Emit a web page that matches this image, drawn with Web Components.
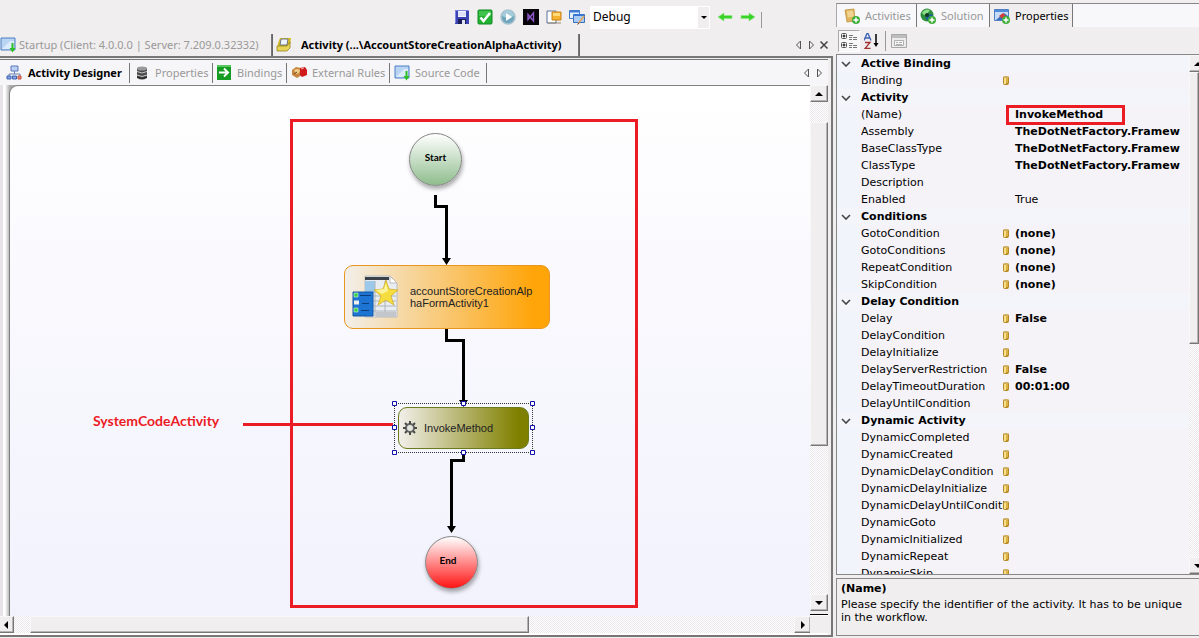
<!DOCTYPE html>
<html lang="en">
<head>
<meta charset="utf-8">
<title>Workflow Studio</title>
<style>
html, body { height: 100%; }
body { margin: 0; background: #f0eeef; color: #000; font: 12px/16px "Noto Sans", "Open Sans", sans-serif; overflow: hidden; }
</style>
</head>
<body>
<wf-studio></wf-studio>
<script>
const define = (name, html, setup) => customElements.define(name, class extends HTMLElement {
  constructor() {
    super();
    const t = document.createElement('template');
    t.innerHTML = html;
    this.attachShadow({ mode: 'open' }).appendChild(t.content.cloneNode(true));
  }
  connectedCallback() { if (setup) setup(this, this.shadowRoot); }
});

/* Icons, all on a 16 x 16 grid unless stated */
const windowArt = '<path d="M1 1h14v12H1z" fill="#b9d4f3" stroke="#4d7fc4"/><path d="M2 12 10 4h4v8z" fill="#dcebfb"/>';
const plus = '<circle cx="12" cy="12" r="4" fill="#3fae3a"/><path d="M12 9.500v5M9.500 12h5" stroke="#fff" stroke-width="1.500"/>';
const ICONS = {
  save: '<path d="M1 1h13l1 1v13H1z" fill="#3c43b4"/><path d="M1 1h13v1H2v12H1z" fill="#7a83e0"/><path d="M4 2h8v6H4z" fill="#f4f6ff"/><path d="M4 4h8M4 6h8" stroke="#c8cdf0"/><path d="M4 10h8v5H4z" fill="#1b1d55"/><path d="M8 11h3v4H8z" fill="#dfe2f5"/>',
  check: '<rect x="1" y="1" width="14" height="14" rx="1" fill="#22b233" stroke="#138a22"/><path d="M2 2h12v5H2z" fill="#53cf5c" opacity=".6"/><path d="M3.500 8.500 6.500 12 13 4" fill="none" stroke="#fff" stroke-width="2.600"/>',
  play: '<circle cx="8" cy="8" r="7" fill="#6fa6bd" stroke="#a9c3cf" stroke-width="1.500"/><path d="M2 7a6 6 0 0 1 12 0c-4 2-8 2-12 0z" fill="#a6ccdb"/><path d="M6 4l6 4-6 4z" fill="#fff"/>',
  vs: '<path d="M0 0h16v16H0z" fill="#07040c"/><path d="M5 5.500v5L10.500 4v8z" fill="none" stroke="#8c57c8" stroke-width="1.400"/>',
  page: '<path d="M1 2h9v12H1z" fill="#fff" stroke="#5b7396"/><path d="M2 14h13" stroke="#9b8a7a"/><path d="M6 3h9v8H6z" fill="#f6b12e" stroke="#c98117"/><path d="M7 4h7v3H7z" fill="#ffd97a"/>',
  windows: '<path d="M.5 1.500h10v8H.5z" fill="#e4effc" stroke="#4179c8"/><path d="M.5 1.500h10v2H.5z" fill="#3e7cd6"/><path d="M4.500 5.500h11v8h-11z" fill="#a9cbf3" stroke="#3a6fbd"/><path d="M5 5h10v2H5z" fill="#3675d1"/><path d="M9 15l6-8" stroke="#e0a658" stroke-width="1.500"/><path d="M8.500 15.500l2-2" stroke="#555"/>',
  back: '<path d="M1 8l6-4v2.500h8v3H7V12z" fill="#38d326" stroke="#8ee685" stroke-width=".6"/>',
  forward: '<path d="M15 8 9 4v2.500H1v3h8V12z" fill="#38d326" stroke="#8ee685" stroke-width=".6"/>',
  startup: windowArt + '<path d="M11.500 6h2v5h2l-3 4.500-3-4.500h2z" fill="#2fc024"/>',
  activity: '<path d="M4 1h11l-1 8-2 3H1l1-6z" fill="#d5bd25"/><path d="M5 2h7l-1 6H4z" fill="#eef4fb" stroke="#6d7480"/><path d="M1 9h10l3-4v6l-3 3H1z" fill="#e8d557" stroke="#8b7a15" stroke-width=".7"/>',
  tree: '<path d="M5 1h7v5H5z" fill="#bcd0f3" stroke="#5a78bd"/><path d="M8.500 6v3M3 11V9h11v2" fill="none" stroke="#6b7fae"/><path d="M1 11h4v3H1z" fill="#86a5e6" stroke="#3e62b0"/><path d="M6.500 11h4v3h-4z" fill="#86a5e6" stroke="#3e62b0"/><path d="M12 11h3v3h-3z" fill="#ef8d7c" stroke="#c04f3d"/>',
  database: '<path d="M3 3v10q5 3 10 0V3z" fill="#4a4a4a"/><ellipse cx="8" cy="3.500" rx="5" ry="2" fill="#9a9a9a"/><path d="M3 6.500q5 3 10 0M3 10q5 3 10 0" fill="none" stroke="#c9c9c9"/><path d="M3 12q5 3 10 0" fill="none" stroke="#222"/>',
  binding: '<path d="M1 0h14v15H1z" fill="#169c22"/><path d="M1 0h14v2H1z" fill="#5bc763"/><path d="M3 7.500h8M8 3.500l4 4-4 4" fill="none" stroke="#fff" stroke-width="2"/>',
  rules: '<path d="M1 5l4-3 5 1 1 7-5 3-5-3z" fill="#c8873e"/><path d="M3 5l3-1 3 1-1 3-3 1z" fill="#f0cf8b"/><path d="M3 9l3-2" stroke="#6b3b12"/><path d="M9 3l5-1 2 3v5l-5 2-2-2z" fill="#cf1b1b"/><path d="M10 4l3-1" stroke="#f4a2a2"/>',
  activities: '<path d="M1 2l9-1 1 12-8 1z" fill="#e0b45c" stroke="#b98a35" stroke-width=".7"/><path d="M3 3l6-.5.8 6-6 1z" fill="#f1d391"/>' + plus,
  solution: '<circle cx="7" cy="7" r="6.500" fill="#2d8f3c"/><path d="M2 5q3-5 8-3l-3 4-3 1z" fill="#8fe08c"/><path d="M5 9q4-4 8-2-1 5-5 6z" fill="#1c5fa0"/><circle cx="7" cy="7" r="2" fill="#123c1c"/>' + plus,
  properties: '<path d="M.5 1.500h14v11H.5z" fill="#c5dcf6" stroke="#4d7fc4"/><path d="M1 2h13v2H1z" fill="#4f8ad8"/><path d="M2 12l8-7 4 3v4z" fill="#3a6fbd"/><path d="M5 8l4-3 3 3-3 3z" fill="#d33c3c"/>' + plus,
  categories: '<rect x=".5" y=".5" width="5" height="5" rx="1" fill="#fff" stroke="#555"/><rect x=".5" y="9.500" width="5" height="5" rx="1" fill="#fff" stroke="#555"/><path d="M1.500 3h3M3 1.500v3M1.500 12h3M3 10.500v3" stroke="#000"/><path d="M8 2.500h4M8 4.500h3M12 4.500h4M8 6.500h3M12 6.500h4M8 10.500h4M8 12.500h3M12 12.500h4M8 14.500h3M12 14.500h4" stroke="#777"/>',
  sort: '<path d="M0 7.500 3 .5h1l3 7M1.500 5h4" fill="none" stroke="#3a60b5" stroke-width="1.300"/><path d="M1 9.500h5l-5 6h5.500" fill="none" stroke="#a03030" stroke-width="1.300"/><path d="M12 1v11" stroke="#000" stroke-width="1.500"/><path d="M9.500 10h5L12 14z"/>',
  pages: '<path d="M.5 1.500h15v13H.5z" fill="#ececec" stroke="#a8a8a8"/><path d="M1 2h14v3H1z" fill="#bdbdbd"/><path d="M3.500 7.500h9v5h-9z" fill="#f6f6f6" stroke="#b0b0b0"/><path d="M5 9.500h2M8 9.500h3M5 11.500h6" stroke="#b0b0b0"/>',
  left: '<path d="M10.500 4v8l-4-4z" fill="none" stroke="#555"/>',
  right: '<path d="M6.500 4v8l4-4z" fill="none" stroke="#555"/>',
  close: '<path d="M4.500 4.500l7 7M11.500 4.500l-7 7" stroke="#444" stroke-width="1.500"/>',
  gear: '<circle cx="8" cy="8" r="4" fill="#e6e6e0" stroke="#666" stroke-width="2"/><path d="M8 1v3M8 12v3M1 8h3M12 8h3M3 3l2 2M11 11l2 2M13 3l-2 2M5 11l-2 2" stroke="#4a4a4a" stroke-width="2"/>'
};
define('wf-icon', '<style>:host{display:block;flex:none;width:16px;height:16px}svg{display:block;width:100%;height:100%}</style><svg viewBox="0 0 16 16" aria-hidden="true"></svg>',
  (el, r) => { r.querySelector('svg').innerHTML = ICONS[el.getAttribute('name')]; });

define('wf-button', `<style>
:host{display:block;flex:none}
button{display:block;margin:0;padding:0;border:0;background:none}
:host([pressed]) button{padding:2px;border:1px solid;border-color:#aaa #fff #fff #aaa;background:#f8f7f8}
</style><button type="button"></button>`,
  (el, r) => {
    const name = el.getAttribute('name');
    const button = r.querySelector('button');
    button.setAttribute('aria-label', name);
    button.innerHTML = `<wf-icon name="${name}"></wf-icon>`;
  });

define('wf-toolbar', `<style>
:host{display:flex;height:34px;box-sizing:border-box;align-items:center;justify-content:flex-end;gap:7px;padding-right:71px}
.combo{position:relative;display:block;width:120px;margin-left:-2px}
select{appearance:none;display:block;width:100%;height:23px;padding:0 3px;border:0;border-radius:0;background:#fff;color:#000;font:12px/22px "Noto Sans",sans-serif}
.combo svg{position:absolute;right:1px;top:1px;background:#f0eeef;pointer-events:none}
.sep{width:1px;height:16px;background:#999;align-self:flex-end;margin:0 0 6px -2px}
</style>
<wf-button name="save"></wf-button><wf-button name="check"></wf-button><wf-button name="play"></wf-button><wf-button name="vs"></wf-button><wf-button name="page"></wf-button><wf-button name="windows"></wf-button>
<label class="combo"><select aria-label="Configuration"><option>Debug</option></select><svg width="11" height="21"><path d="M3 9h6l-3 3z"/></svg></label>
<wf-button name="back"></wf-button><wf-button name="forward"></wf-button><span class="sep"></span>`);

define('wf-tab', `<style>
:host{display:block;flex:none}
button{display:flex;align-items:center;gap:var(--gap,5px);width:100%;height:100%;margin:0;padding:0 0 0 var(--lead,4px);border:0;background:none;color:#999;font:11px/16px "Noto Sans",sans-serif;white-space:nowrap;border-right:1px solid #777}
:host([active]) button{color:#000}
:host([bold]) button{font-weight:700}
</style><button type="button" role="tab"><slot name="icon"></slot><span><slot></slot></span></button>`);

define('wf-scrollbar', `<style>
:host{display:flex;min-width:0;min-height:0;background:repeating-conic-gradient(#eae8ea 0 25%,#fff 0 50%) 0 0/2px 2px;--side:17px}
:host([vertical]){flex-direction:column}
button{flex:none;display:grid;place-items:center;box-sizing:border-box;width:var(--side);height:var(--side);margin:0;padding:0}
:host([vertical]) button{width:auto;min-width:var(--side)}
button,.thumb{box-sizing:border-box;border:1px solid;border-color:#f8f8f8 #777 #777 #f8f8f8;background:#f0eeef;box-shadow:inset -1px -1px #b5b3b4}
.track{flex:1;display:flex;flex-direction:inherit;min-height:0;min-width:0}
.before{flex:none;flex-basis:var(--before,0%)}
.thumb{flex:none;flex-basis:var(--thumb,50%)}
svg{display:block}
.v{display:none}:host([vertical]) .v{display:block}:host([vertical]) .h{display:none}
</style>
<button type="button" aria-label="Scroll back"><svg width="8" height="8"><path class="h" d="M6 0v8L2 4z"/><path class="v" d="M0 6h8L4 2z"/></svg></button>
<div class="track"><div class="before"></div><div class="thumb"></div></div>
<button type="button" aria-label="Scroll on"><svg width="8" height="8"><path class="h" d="M2 0v8l4-4z"/><path class="v" d="M0 2h8L4 6z"/></svg></button>`);

/* Workflow nodes */
define('wf-terminal', `<style>
:host{display:grid;place-items:center;box-sizing:border-box;width:53px;height:53px;padding-bottom:6px;border:1px solid #858585;border-radius:50%;background:linear-gradient(#fff,var(--tone));box-shadow:1px 3px 4px #0005;font:bold 10px/12px Lato,sans-serif}
</style><span><slot></slot></span>`);
define('wf-step', `<style>
:host{display:flex;align-items:center;box-sizing:border-box;border:1px solid var(--edge);border-radius:9px;background:linear-gradient(90deg,#f2efea,var(--tone) 92%);font:11px/12px "Liberation Sans",sans-serif;color:#222}
</style><slot name="icon"></slot><span><slot></slot></span>`);
define('wf-form-art', `<style>:host{display:block;flex:none}svg{display:block}</style>
<svg width="48" height="44" viewBox="0 0 48 44" aria-hidden="true">
<path d="M13 1h25l7 7v34H13z" fill="#e9edf1" stroke="#b8bcc2"/><path d="M13 2h24v3H13z" fill="#3b4148"/><path d="M13 6h10v12H13z" fill="#9cc8ea"/><path d="M38 1v7h7z" fill="#fff" stroke="#bbb"/>
<path d="M14 21h30M14 26h30M14 31h30M14 36h30M23 6v35M33 6v35" stroke="#aeb4bb"/><path d="M24 37h20v5H24z" fill="#c3c6ca"/>
<path d="M34 5l3 9 9 1-7 6 3 9-8-5-8 5 3-9-7-6 9-1z" fill="#f5dd3f" stroke="#cfa823" stroke-width=".7"/><path d="M34 8l2 8-6 3-6-4 8-1z" fill="#fdf39a"/>
<path d="M1 17h20v24H1z" fill="#1d74d3" stroke="#15569f"/><path d="M2 18h4v4H2zM2 33h4v4H2z" fill="#39d04a" stroke="#d6f5da" stroke-width=".6"/><path d="M2 25.500h5v4H2z" fill="#f0f0f0"/><path d="M8 20.500h11M10 28.500h7M9 35.500h8" stroke="#0d3d78"/>
</svg>`);

define('wf-canvas', `<style>
:host{display:block;min-width:0;min-height:0;overflow:hidden;background:linear-gradient(90deg,#e6e4e6,#e6e4e6 3px,#fff 3px,#fff 5px,#aaa 10px)}
.sheet{position:relative;box-sizing:border-box;height:100%;margin-left:9px;border:1px solid #808080;border-width:1px 0 0 1px;border-radius:9px 0 0 0;background:linear-gradient(#fff,#f9f9fe 40%,#f1f2fc)}
.sheet>*{position:absolute}
.links{left:0;top:0}
.frame{left:280px;top:33px;width:342px;height:483px;border:3px solid #ec1c24}
.start{left:399px;top:47px;--tone:#8fbd8d}
.form{left:334px;top:179px;width:206px;height:64px;padding-left:7px;gap:10px;--tone:#ffa50a;--edge:#e8961e}
.invoke{left:388px;top:321px;width:131px;height:42px;padding-left:3px;gap:6px;--tone:#808000;--edge:#6d7a1c}
.end{left:415px;top:450px;padding-right:7px;--tone:#ff1414}
.note{left:83px;top:326px;color:#ec1c24;font:bold 14px/18px Lato,sans-serif}
</style>
<div class="sheet">
<svg class="links" width="640" height="520" aria-hidden="true">
<g fill="none" stroke="#000" stroke-width="3"><path d="M425.500 109v11.500h11V174"/><path d="M436.500 243v11.500h17V317"/><path d="M453.500 364v10.500h-12V441"/><path d="M233 338.500h150" stroke="#ec1c24"/></g>
<path d="M432 172h9l-4.500 7zM449 314h9l-4.500 7zM437 440h9l-4.500 7z"/>
</svg>
<wf-terminal class="start">Start</wf-terminal>
<wf-step class="form"><wf-form-art slot="icon"></wf-form-art>accountStoreCreationAlp<br>haFormActivity1</wf-step>
<wf-step class="invoke"><wf-icon slot="icon" name="gear"></wf-icon>InvokeMethod</wf-step>
<wf-terminal class="end">End</wf-terminal>
<svg class="links" width="640" height="520" aria-hidden="true"><path d="M384 317.500h139M384 366.500h139M384.500 318v49M522.500 318v49" fill="none" stroke="#333" stroke-dasharray="1 1"/>
<path d="M382.500 315.500h4v4h-4zM451.500 315.500h4v4h-4zM520.500 315.500h4v4h-4zM382.500 339.500h4v4h-4zM520.500 339.500h4v4h-4zM382.500 364.500h4v4h-4zM451.500 364.500h4v4h-4zM520.500 364.500h4v4h-4z" fill="#fff" stroke="#1010a8"/></svg>
<span class="note">SystemCodeActivity</span>
<div class="frame"></div>
</div>`);

define('wf-designer', `<style>
:host{display:flex;flex-direction:column;min-width:0;min-height:0}
.tabs{display:flex;flex:none;height:22px}
.outer wf-tab{border-right:1px solid #666}
.outer .first{width:272px;--lead:0px;--gap:3px}
.outer .second{width:306px;--lead:3px;--gap:9px}
.nav{display:flex;align-items:center;margin-left:auto;margin-right:3px}
.nav wf-button{width:13px;display:flex;justify-content:center}
.frame{display:flex;flex:1;flex-direction:column;min-height:0;border:solid #777;border-width:2px 2px 2px 0;margin-bottom:1px;padding:1px 3px 0 0}
.inner{height:25px;background:#f6f5f8;border-top:1px solid #777;align-items:center}
.inner wf-tab{height:20px}
.inner .a{width:130px;--lead:6px;--gap:6px}.inner .b{width:83px}.inner .c{width:74px;--lead:3px}.inner .d{width:103px}.inner .e{width:97px}
.body{flex:1;min-height:0;display:grid;grid-template:minmax(0,1fr) 17px / minmax(0,1fr) 18px;padding-bottom:2px;background:#fff}
.side{display:flex;flex-direction:column;min-height:0}
.side wf-scrollbar{flex:1;--before:4%;--thumb:66%}
.grip{height:3px;border-bottom:1px solid #000;margin-bottom:1px;background:#f0eeef}
.bottom{display:flex;margin-right:-1px}
.bottom wf-scrollbar{flex:1;--before:2%;--thumb:64%;margin-left:-3px}
.corner{background:#f0eeef}
</style>
<wf-toolbar></wf-toolbar>
<div class="tabs outer" role="tablist">
<wf-tab class="first"><wf-icon slot="icon" name="startup"></wf-icon>Startup (Client: 4.0.0.0 | Server: 7.209.0.32332)</wf-tab>
<wf-tab class="second" active bold><wf-icon slot="icon" name="activity"></wf-icon>Activity (...\\AccountStoreCreationAlphaActivity)</wf-tab>
<div class="nav"><wf-button name="left"></wf-button><wf-button name="right"></wf-button><wf-button name="close"></wf-button></div>
</div>
<div class="frame">
<div class="tabs inner" role="tablist">
<wf-tab class="a" active bold><wf-icon slot="icon" name="tree"></wf-icon>Activity Designer</wf-tab>
<wf-tab class="b"><wf-icon slot="icon" name="database"></wf-icon>Properties</wf-tab>
<wf-tab class="c"><wf-icon slot="icon" name="binding"></wf-icon>Bindings</wf-tab>
<wf-tab class="d"><wf-icon slot="icon" name="rules"></wf-icon>External Rules</wf-tab>
<wf-tab class="e"><wf-icon slot="icon" name="startup"></wf-icon>Source Code</wf-tab>
<div class="nav"><wf-button name="left"></wf-button><wf-button name="right"></wf-button></div>
</div>
<div class="body">
<wf-canvas></wf-canvas>
<div class="side"><wf-scrollbar vertical></wf-scrollbar><div class="grip"></div></div>
<div class="bottom"><wf-scrollbar></wf-scrollbar></div>
<div class="corner"></div>
</div>
</div>`);

/* [label, value, has binding marker]; a lone label opens a category */
const PROPS = [
  ['Active Binding'], ['Binding', '', 1],
  ['Activity'], ['(Name)', 'InvokeMethod', 0], ['Assembly', 'TheDotNetFactory.Framew', 0], ['BaseClassType', 'TheDotNetFactory.Framew', 0], ['ClassType', 'TheDotNetFactory.Framew', 0], ['Description', '', 0], ['Enabled', 'True', 0],
  ['Conditions'], ['GotoCondition', '(none)', 1], ['GotoConditions', '(none)', 1], ['RepeatCondition', '(none)', 1], ['SkipCondition', '(none)', 1],
  ['Delay Condition'], ['Delay', 'False', 1], ['DelayCondition', '', 1], ['DelayInitialize', '', 1], ['DelayServerRestriction', 'False', 1], ['DelayTimeoutDuration', '00:01:00', 1], ['DelayUntilCondition', '', 1],
  ['Dynamic Activity'], ['DynamicCompleted', '', 1], ['DynamicCreated', '', 1], ['DynamicDelayCondition', '', 1], ['DynamicDelayInitialize', '', 1], ['DynamicDelayUntilConditi', '', 1], ['DynamicGoto', '', 1], ['DynamicInitialized', '', 1], ['DynamicRepeat', '', 1], ['DynamicSkip', '', 1]
];
define('wf-property-grid', `<style>
:host{display:grid;grid-template-columns:minmax(0,1fr) 10px;min-height:0;overflow:hidden;border:1px solid #888;border-right:0;background:#f5f2f8;font:11px/17px "DejaVu Sans",sans-serif}
.view{overflow:hidden;min-height:0;background:linear-gradient(90deg,#f2f4fb 22px,#f5f2f8 22px)}
table{width:100%;table-layout:fixed;border-collapse:collapse}
.gut{width:24px}.nam{width:150px}
td,th{height:17px;padding:0;text-align:left;white-space:nowrap;overflow:hidden;font-weight:400}
th[scope=rowgroup]{font-weight:700}
tr.cat{background:#f3f5fb}
.name{position:relative}
.name svg{position:absolute;right:2px;top:4px}
.gutter svg{display:block;margin-left:4px}
.value{padding-left:4px;font-weight:700}
.plain{font-weight:400}
wf-scrollbar{overflow:hidden;--thumb:56%}
.marked{position:relative;overflow:visible}
.marked::after{content:"";position:absolute;left:-5px;top:-1px;width:113px;height:14px;border:3px solid #ec1c24}
</style>
<div class="view"><table aria-label="Properties"><colgroup><col class="gut"><col class="nam"><col></colgroup><tbody></tbody></table></div>
<wf-scrollbar vertical></wf-scrollbar>`,
  (el, r) => {
    r.querySelector('tbody').innerHTML = PROPS.map(([name, value, bound]) => value === undefined
      ? `<tr class="cat"><td class="gutter"><svg width="10" height="6"><path d="M1 1l4 4 4-4" fill="none" stroke="#444" stroke-width="1.600"/></svg></td><th scope="rowgroup" colspan="2">${name}</th></tr>`
      : `<tr><td></td><th class="name" scope="row">${name}${bound ? '<svg width="6" height="9"><rect width="6" height="9" rx="2" fill="#b58a26"/><path d="M1 2h2v6H1z" fill="#f8e08a"/><path d="M3 2h2v5H3z" fill="#dcb245"/><path d="M1 1h4" stroke="#e9d49a"/></svg>' : ''}</th><td class="value${value === 'True' ? ' plain' : ''}${name === '(Name)' ? ' marked' : ''}">${value}</td></tr>`).join('');
  });

define('wf-properties', `<style>
:host{display:flex;flex-direction:column;min-width:0;min-height:0;padding-top:3px}
.tabs{display:flex;flex:none;height:24px;border-top:1px solid #888;border-left:1px solid #aaa;background:#f8f7f9;box-sizing:border-box}
.a{width:80px;--lead:7px}.b{width:73px;--lead:3px}.c{width:83px;background:#f0eeef}
.tools{display:flex;flex:none;align-items:center;height:27px;box-sizing:border-box;padding-left:2px;gap:4px}
.tools i{width:1px;height:20px;background:#999;margin:0 1px}
wf-property-grid{flex:1}
.help{flex:none;height:58px;box-sizing:border-box;margin:3px 0 2px;padding:3px 8px 0 4px;border:1px solid #888;border-right:0;font:11px/13px "DejaVu Sans",sans-serif}
h2{margin:0 0 3px;font:bold 11px/13px "DejaVu Sans",sans-serif}
p{margin:0}
</style>
<div class="tabs" role="tablist">
<wf-tab class="a"><wf-icon slot="icon" name="activities"></wf-icon>Activities</wf-tab>
<wf-tab class="b"><wf-icon slot="icon" name="solution"></wf-icon>Solution</wf-tab>
<wf-tab class="c" active><wf-icon slot="icon" name="properties"></wf-icon>Properties</wf-tab>
</div>
<div class="tools"><wf-button name="categories" pressed></wf-button><wf-button name="sort"></wf-button><i></i><wf-button name="pages"></wf-button></div>
<wf-property-grid></wf-property-grid>
<section class="help"><h2>(Name)</h2><p>Please specify the identifier of the activity. It has to be unique in the workflow.</p></section>`);

define('wf-studio', `<style>
:host{display:grid;grid-template:minmax(0,1fr) / minmax(0,1fr) 363px;gap:3px;height:100vh}
</style><wf-designer></wf-designer><wf-properties></wf-properties>`);
</script>
</body>
</html>
